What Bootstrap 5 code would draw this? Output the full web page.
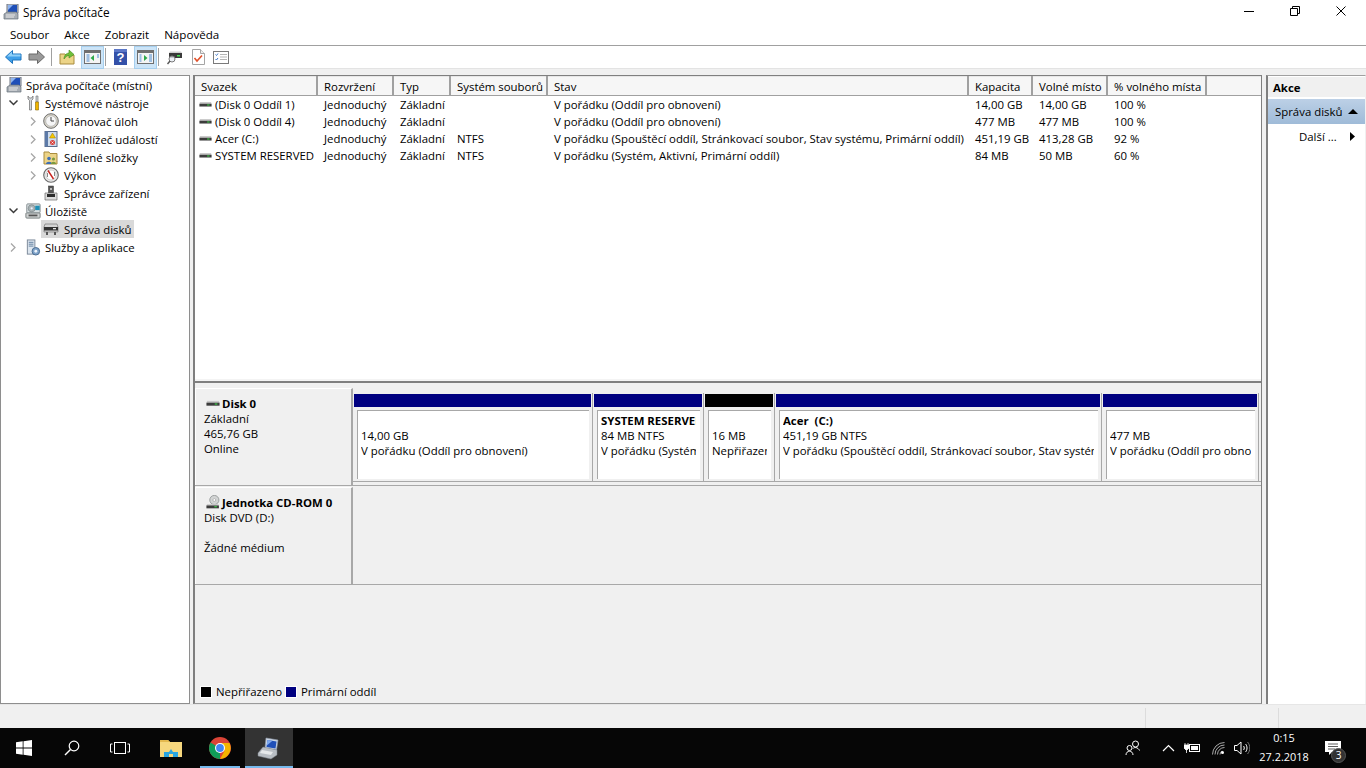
<!DOCTYPE html>
<html lang="cs">
<head>
<meta charset="utf-8">
<title>Správa počítače</title>
<link href="https://cdn.jsdelivr.net/npm/bootstrap@5.3.0/dist/css/bootstrap.min.css" rel="stylesheet">
<style>
html,body{margin:0;height:768px;overflow:hidden}
body{font-family:"Open Sans","Noto Sans",sans-serif;font-size:11.4px;line-height:15px;color:#000;background:#f0f0f0;width:1366px}
svg{display:block;flex:none}
.wnd{height:728px}
.titlerow{height:24px;background:#fff;padding-left:3px}
.titlerow .ttl{margin-left:4px;font-size:11.8px}
.ctlset{margin-right:2px;margin-top:-3px}
.ctl{width:46px;height:20px}
.menurow{height:22px;background:#fff;border-bottom:1px solid #a0a0a0;padding-left:10px;gap:15px}
.menurow span{font-size:11.6px}
.toolrow{height:23px;background:#fff;padding-left:1.5px;border-bottom:1px solid #e3e3e3}
.tb{width:23px;height:23px}
.tb-on{background:#cce4f7;border:1px solid #a6cfee;margin-left:2px}
.tsep{width:1px;height:18px;background:#a0a0a0}
.ts1{margin:0 4px 0 3px}.ts2{margin:0 3px 0 1px}.ts3{margin:0 5px 0 1px}
.mainrow{height:635px;padding-top:6px}
.treepane{width:190px;flex:none;border:1px solid #8e8e8e;background:#fff}
.trow{height:18px;padding-left:7px}
.trow.root{padding-left:5px}
.trow.l2{padding-left:27px}
.chev{width:11px;height:18px;margin-right:6px}
.l2 .chev{margin-right:4px}
.trow .ico{margin-right:4px}
.l2 .ico{margin-right:5px}
.selwrap{background:#d9d9d9;height:18px;padding:0 3px 0 2px;margin-left:-2px}
.midpane{width:1069px;flex:none;margin-left:3px;border-left:2px solid #7f7f7f;border-top:1px solid #7f7f7f;border-bottom:1px solid #9a9a9a;border-right:1px solid #7f7f7f}
.listpart{height:303px;flex:none;background:#fff;overflow:hidden}
.vols{table-layout:fixed;width:1066px;border-collapse:collapse;margin:0}
.vols th,.vols td{font-weight:400;padding:0 0 0 7px;white-space:nowrap;overflow:hidden;background:transparent;border:0;box-shadow:none;color:#000;font-size:11.4px}
.vols th{height:19px;line-height:16px;padding:1px 0 0 6px;background:#f6f6f6;border-right:2px solid #a0a0a0;border-bottom:1px solid #a0a0a0;border-top:1px solid #e6e6e6;vertical-align:middle}
.vols td{height:17px;line-height:17px}
.vols th:last-child{border-right:0}
.c1{width:122px}.c2{width:76px}.c3{width:57px}.c4{width:97px}.c5{width:421px}.c6{width:64px}.c7{width:75px}.c8{width:99px}
.vols td.volname{padding-left:4px}
.volname .inner{gap:3px}
.splitter{height:4px;flex:none;background:#f4f4f4;border-bottom:2px solid #7f7f7f}
.graph{background:#f0f0f0;padding-top:5px}
.diskrow{height:98px;flex:none;border-bottom:1px solid #a8a8a8;margin-bottom:1px}
.disklabel{width:158px;flex:none;padding:7px 0 0 8px;background:#f0f0f0;border-top:1px solid #fff;border-left:1px solid #fff;border-right:2px solid #a8a8a8}
.disklabel .nm{font-weight:700;height:15px;margin-left:2px}
.nm-d{gap:2px}.nm-c{gap:1px}
.parts{padding-top:5px;padding-left:1px;height:94px;border-bottom:1px solid #a8a8a8}
.prt{height:88px;flex:none;padding-right:3px;position:relative}
.prt::after{content:"";position:absolute;right:1px;top:0;bottom:0;width:1px;background:#a8a8a8}
.bar-p{height:13px;background:#000080;margin-top:1px}
.bar-n{height:13px;background:#000;margin-top:1px}
.pbox{height:69px;margin:3px 2px 0 3px;background:#fff;border-top:1px solid #a8a8a8;border-left:1px solid #a8a8a8;padding:2px 0 0 3px;white-space:nowrap}
.pclip{overflow:hidden;height:60px;margin-right:4px}
.w1{width:240px}.w2{width:111px}.w3{width:71px}.w4{width:327px}.w5{width:157px}
.b{font-weight:700}
.legend{height:21px;margin-top:auto;margin-bottom:1px;padding-left:5px;gap:4px}
.sw{width:12px;height:12px;flex:none;border:1px solid #fff}
.sw-n{background:#000}.sw-p{background:#000080}
.leg-t{width:65px;flex:none;white-space:nowrap}
.actpane{flex:1;margin-left:4px;border-left:2px solid #7f7f7f;border-top:1px solid #a0a0a0;background:#fff;border-right:1px solid #f0f0f0}
.acthd{height:21px;background:#f0f0f0;padding-left:5px;font-weight:700;border-bottom:1px solid #fff;margin-top:1px}
.actsel{height:25px;margin-top:1px;background:linear-gradient(#bcd0e6,#9fbbd8);padding:0 7px 0 7px}
.actitem{height:24px;padding:0 10px 0 31px}
.statusrow{height:24px;background:#f0f0f0;border-top:1px solid #e6e6e6;padding-top:3px}
.stc{height:20px;border-left:1px solid #dcdcdc}
.st1{width:1145px;border-left:0}.st2{width:133px}
.taskbar{height:40px;background:#060606;color:#fff}
.tk{height:40px;width:48px;position:relative}
.tk-m3{margin-left:3px}.tk-m1{margin-left:1px}
.tk-run::after{content:"";position:absolute;left:4px;right:4px;bottom:0;height:2px;background:#76b9ed}
.tk-act{background:#333}
.tk-act::after{left:0;right:0}
.tkspace{flex:1}
.clock{width:62px;font-size:10.9px;line-height:19px;text-align:center;color:#fff;margin-top:-2px}
.tray{width:24px}
.tr-p{margin-right:11px}.tr-w{margin-left:2px}.tr-s{width:23px}
.noti{position:absolute;left:16px;top:20px;width:15px;height:15px;border-radius:50%;background:#333;border:1px solid #555;font-size:10px;line-height:13px;text-align:center;color:#fff}
.tk-n{width:36px}
.tk-end{width:15px}
</style>
</head>
<body>
<svg width="0" height="0" class="position-absolute">
<defs>
<symbol id="comp" viewBox="0 0 16 16"><rect x="4" y="0" width="11" height="9" fill="#c8ccd4" stroke="#6a7280"/><rect x="5" y="1" width="9" height="7" fill="#1f4fb8"/><path d="M5 1h5l-5 5z" fill="#8fb4ee"/><path d="M1 10l3-2h9l2 2v5H1z" fill="#a7adb4" stroke="#66707a" stroke-width=".7"/><path d="M3 11h9M3 13h8" stroke="#e8e8e8"/></symbol>
<symbol id="tools" viewBox="0 0 16 16"><path d="M3 1v3l1.500 1.500V15h2V5.500L8 4V1L6.500 3h-2z" fill="#d4d8dc" stroke="#6c6c6c" stroke-width=".7"/><path d="M11 1h2v6h-2z" fill="#cfd3d8" stroke="#6c6c6c" stroke-width=".6"/><path d="M10.500 7h3v8h-3z" fill="#f0b400" stroke="#8a6a00" stroke-width=".6"/></symbol>
<symbol id="clk" viewBox="0 0 16 16"><circle cx="8" cy="8" r="7.300" fill="#d8d4c8" stroke="#6f6f6f"/><circle cx="8" cy="8" r="5.300" fill="#f6f6f6" stroke="#a5a5a5" stroke-width=".6"/><path d="M8 4v4h3" fill="none" stroke="#444" stroke-width="1"/></symbol>
<symbol id="log" viewBox="0 0 16 16"><rect x="2" y="0.500" width="12" height="15" fill="#cfdcec" stroke="#5a6d8c"/><rect x="2" y="0.500" width="3" height="15" fill="#5c7aa8"/><path d="M9.500 2l3 5h-6z" fill="#f7c600" stroke="#9a7d00" stroke-width=".5"/><circle cx="9.500" cy="11.500" r="2.500" fill="#d8403a"/><path d="M8.500 10.500l2 2m0-2l-2 2" stroke="#fff" stroke-width=".7"/></symbol>
<symbol id="share" viewBox="0 0 16 16"><path d="M1 3h5l1 1.500h7V15H1z" fill="#ecd488" stroke="#a98c3e"/><circle cx="6" cy="9.500" r="1.800" fill="#3f6fb5"/><path d="M3 15c0-3 6-3 6 0z" fill="#3f6fb5"/><circle cx="10.500" cy="10" r="1.600" fill="#7c9a3e"/><path d="M8 15c0-3 5-3 5 0z" fill="#7c9a3e"/></symbol>
<symbol id="perf" viewBox="0 0 16 16"><circle cx="8" cy="8" r="7.300" fill="#e9e9e9" stroke="#6a6a6a" stroke-width="1.100"/><circle cx="8" cy="8" r="5" fill="#fff" stroke="#b5b5b5" stroke-width=".6"/><path d="M5 3.500L10.500 12" stroke="#c8201c" stroke-width="1.400"/><path d="M4.500 6v4M11.500 5v4" stroke="#555" stroke-width=".7"/></symbol>
<symbol id="devm" viewBox="0 0 16 16"><rect x="5.500" y="1" width="5" height="7" fill="#555" stroke="#333" stroke-width=".5"/><path d="M2 8h12v7H2z" fill="#dcdcdc" stroke="#6a6a6a" stroke-width=".7"/><rect x="4" y="9" width="8" height="3" fill="#2c2c2c"/><circle cx="8" cy="4" r="1" fill="#ddd"/></symbol>
<symbol id="stor" viewBox="0 0 18 18"><rect x="1" y="11" width="16" height="6" rx="1" fill="#cfd2d2" stroke="#6f7676"/><rect x="4" y="13" width="10" height="2" fill="#555"/><rect x="2" y="1" width="15" height="10" rx="1" fill="#d9e0e2" stroke="#7c8588"/><circle cx="7.500" cy="6" r="4" fill="#a8b2b4" stroke="#6c7678" stroke-width=".6"/><circle cx="7.500" cy="6" r="1.300" fill="#eef"/><rect x="11.500" y="3" width="5" height="5" fill="#1f8fb5"/></symbol>
<symbol id="disk" viewBox="0 0 16 8"><path d="M1 1h14v2H1z" fill="#c9c9c9"/><path d="M0.500 3h15v3.500H.5z" fill="#3c3c3c"/><rect x="10" y="4" width="3" height="1.200" fill="#3ee04a"/></symbol>
<symbol id="bigdisk" viewBox="0 0 16 16"><path d="M2 3h12l1 3v5H1V6z" fill="#d5d5d5" stroke="#777" stroke-width=".7"/><rect x="1" y="6" width="14" height="3.500" fill="#333"/><rect x="3" y="11" width="2" height="3" fill="#555"/><rect x="11" y="11" width="2" height="3" fill="#555"/><rect x="10" y="7" width="3" height="1.300" fill="#e8e8e8"/></symbol>
<symbol id="svc" viewBox="0 0 16 18"><rect x="2" y="1" width="8" height="15" fill="#dde6ef" stroke="#7a8898"/><path d="M3.500 3.500h5M3.500 5.500h5M3.500 7.500h5" stroke="#5f7d9e"/><circle cx="11" cy="13" r="4" fill="#7fa3c9" stroke="#486a8f"/><circle cx="11" cy="13" r="1.500" fill="#eef4fb"/></symbol>
<symbol id="cd" viewBox="0 0 18 18"><circle cx="10" cy="6" r="5.500" fill="#d2d4d4" stroke="#8f9494"/><circle cx="10" cy="6" r="1.700" fill="#fff" stroke="#888" stroke-width=".6"/><path d="M1 11h14v1.500H1z" fill="#c9c9c9"/><path d="M0.500 12.500h15V16H.5z" fill="#3c3c3c"/><rect x="10" y="13.500" width="3" height="1.200" fill="#3ee04a"/></symbol>
<symbol id="chd" viewBox="0 0 11 8"><path d="M1.500 1.500L5.500 5.500L9.500 1.500" fill="none" stroke="#3a3a3a" stroke-width="1.500"/></symbol>
<symbol id="chr" viewBox="0 0 11 11"><path d="M3 1.500L7 5.500L3 9.500" fill="none" stroke="#a6a6a6" stroke-width="1.300"/></symbol>
</defs>
</svg>

<div class="wnd d-flex flex-column">
  <div class="titlerow d-flex align-items-center">
    <svg width="16" height="16"><use href="#comp"/></svg>
    <span class="ttl">Správa počítače</span>
    <div class="ctlset ms-auto d-flex">
      <div class="ctl d-flex align-items-center justify-content-center"><svg width="10" height="10"><path d="M0 5.500h10" stroke="#000"/></svg></div>
      <div class="ctl d-flex align-items-center justify-content-center"><svg width="10" height="10"><path d="M.5 2.500h7v7h-7zM2.500 2.500v-2h7v7h-2" fill="none" stroke="#000"/></svg></div>
      <div class="ctl d-flex align-items-center justify-content-center"><svg width="10" height="10"><path d="M.5.5l9 9m0-9l-9 9" stroke="#000"/></svg></div>
    </div>
  </div>
  <div class="menurow d-flex align-items-center">
    <span>Soubor</span><span>Akce</span><span>Zobrazit</span><span>Nápověda</span>
  </div>
  <div class="toolrow d-flex align-items-center">
    <div class="tb d-flex align-items-center justify-content-center"><svg width="17" height="14" viewBox="0 0 17 14"><path d="M0.500 7L7.500 0.500V4H16V10H7.500V13.500z" fill="#3f9fe8" stroke="#1f74bd"/><path d="M7 1.500V4.500H15.500V6.500H2z" fill="#8fd0f7"/></svg></div>
    <div class="tb d-flex align-items-center justify-content-center"><svg width="17" height="14" viewBox="0 0 17 14"><path d="M16.500 7L9.500 0.500V4H1V10H9.500V13.500z" fill="#9a9a9a" stroke="#6a6a6a"/></svg></div>
    <div class="tsep ts1"></div>
    <div class="tb d-flex align-items-center justify-content-center"><svg width="16" height="16" viewBox="0 0 16 16"><path d="M1 5h5l1 1h8v9H1z" fill="#ecd488" stroke="#a98c3e"/><path d="M5 10c0-4 3-6 5-6V1l5 4.500L10 9V6.500C8 6.500 6.500 8 5 10z" fill="#6fbf3a" stroke="#418a1e" stroke-width=".6"/></svg></div>
    <div class="tb tb-on d-flex align-items-center justify-content-center"><svg width="17" height="14" viewBox="0 0 17 14"><rect x=".5" y=".5" width="16" height="13" fill="#f4f4f4" stroke="#6f6f6f"/><rect x="1" y="1" width="15" height="2" fill="#6f6f6f"/><path d="M2.500 5h3M2.500 7h3M2.500 9h3M2.500 11h3M13 5h2M13 7h2" stroke="#4a8bd0"/><path d="M10 5v6L6.500 8z" fill="#2fa84a"/></svg></div>
    <div class="tsep ts2"></div>
    <div class="tb d-flex align-items-center justify-content-center"><svg width="13" height="16" viewBox="0 0 13 16"><rect width="13" height="16" fill="#3350a8"/><path d="M0 0h13v3H0z" fill="#5b77c8"/><text x="6.500" y="13" text-anchor="middle" font-family="Liberation Sans" font-weight="700" font-size="13" fill="#fff">?</text></svg></div>
    <div class="tb tb-on d-flex align-items-center justify-content-center"><svg width="17" height="14" viewBox="0 0 17 14"><rect x=".5" y=".5" width="16" height="13" fill="#f4f4f4" stroke="#6f6f6f"/><rect x="1" y="1" width="15" height="2" fill="#6f6f6f"/><path d="M2.500 5h2M2.500 7h2M2.500 9h2M2.500 11h2M12 5h3M12 7h3M12 9h3M12 11h3" stroke="#4a8bd0"/><path d="M7 5v6l3.500-3z" fill="#2fa84a"/></svg></div>
    <div class="tsep ts3"></div>
    <div class="tb d-flex align-items-center justify-content-center"><svg width="16" height="15" viewBox="0 0 16 15"><rect x="2" y="3" width="13" height="5" fill="#3a3a3a"/><path d="M3 1.500h11L15 3H2z" fill="#cfcfcf"/><rect x="10" y="5" width="3" height="1.500" fill="#44e04e"/><circle cx="5" cy="9" r="3" fill="#e8eef4" fill-opacity=".8" stroke="#7a7a7a"/><path d="M3 11l-2.500 3" stroke="#555" stroke-width="1.400"/></svg></div>
    <div class="tb d-flex align-items-center justify-content-center"><svg width="13" height="16" viewBox="0 0 13 16"><path d="M.5.5h8l4 4v11H.5z" fill="#fff" stroke="#a5a5a5"/><path d="M8.500.5v4h4" fill="#eee" stroke="#a5a5a5"/><path d="M2.500 9l2.500 3L10 6.500" fill="none" stroke="#e0502a" stroke-width="1.600"/></svg></div>
    <div class="tb d-flex align-items-center justify-content-center"><svg width="16" height="13" viewBox="0 0 16 13"><rect x=".5" y=".5" width="15" height="12" fill="#fff" stroke="#7a7a7a"/><path d="M2.500 3.500l1 1 1.500-2M2.500 8l1 1 1.500-2" fill="none" stroke="#3f78c8"/><path d="M7 3.500h7M7 6h7M7 8.500h7" stroke="#b5b5b5"/></svg></div>
  </div>

  <div class="mainrow d-flex">
    <div class="treepane">
      <div class="trow root d-flex align-items-center"><svg class="ico" width="16" height="16"><use href="#comp"/></svg>Správa počítače (místní)</div>
      <div class="trow d-flex align-items-center"><div class="chev d-flex align-items-center"><svg width="11" height="8"><use href="#chd"/></svg></div><svg class="ico" width="16" height="16"><use href="#tools"/></svg>Systémové nástroje</div>
      <div class="trow l2 d-flex align-items-center"><div class="chev d-flex align-items-center"><svg width="11" height="11"><use href="#chr"/></svg></div><svg class="ico" width="16" height="16"><use href="#clk"/></svg>Plánovač úloh</div>
      <div class="trow l2 d-flex align-items-center"><div class="chev d-flex align-items-center"><svg width="11" height="11"><use href="#chr"/></svg></div><svg class="ico" width="16" height="16"><use href="#log"/></svg>Prohlížeč událostí</div>
      <div class="trow l2 d-flex align-items-center"><div class="chev d-flex align-items-center"><svg width="11" height="11"><use href="#chr"/></svg></div><svg class="ico" width="16" height="16"><use href="#share"/></svg>Sdílené složky</div>
      <div class="trow l2 d-flex align-items-center"><div class="chev d-flex align-items-center"><svg width="11" height="11"><use href="#chr"/></svg></div><svg class="ico" width="16" height="16"><use href="#perf"/></svg>Výkon</div>
      <div class="trow l2 d-flex align-items-center"><div class="chev"></div><svg class="ico" width="16" height="16"><use href="#devm"/></svg>Správce zařízení</div>
      <div class="trow d-flex align-items-center"><div class="chev d-flex align-items-center"><svg width="11" height="8"><use href="#chd"/></svg></div><svg class="ico" width="16" height="16"><use href="#stor"/></svg>Úložiště</div>
      <div class="trow l2 d-flex align-items-center"><div class="chev"></div><div class="selwrap d-flex align-items-center"><svg class="ico" width="16" height="16"><use href="#bigdisk"/></svg>Správa disků</div></div>
      <div class="trow d-flex align-items-center"><div class="chev d-flex align-items-center"><svg width="11" height="11"><use href="#chr"/></svg></div><svg class="ico" width="16" height="17"><use href="#svc"/></svg>Služby a aplikace</div>
    </div>

    <div class="midpane d-flex flex-column">
      <div class="listpart">
        <table class="table vols">
          <thead><tr><th class="c1">Svazek</th><th class="c2">Rozvržení</th><th class="c3">Typ</th><th class="c4">Systém souborů</th><th class="c5">Stav</th><th class="c6">Kapacita</th><th class="c7">Volné místo</th><th class="c8">% volného místa</th><th></th></tr></thead>
          <tbody>
            <tr><td class="volname"><div class="inner d-flex align-items-center"><svg width="13" height="7"><use href="#disk"/></svg>(Disk 0 Oddíl 1)</div></td><td>Jednoduchý</td><td>Základní</td><td></td><td>V pořádku (Oddíl pro obnovení)</td><td>14,00 GB</td><td>14,00 GB</td><td>100 %</td><td></td></tr>
            <tr><td class="volname"><div class="inner d-flex align-items-center"><svg width="13" height="7"><use href="#disk"/></svg>(Disk 0 Oddíl 4)</div></td><td>Jednoduchý</td><td>Základní</td><td></td><td>V pořádku (Oddíl pro obnovení)</td><td>477 MB</td><td>477 MB</td><td>100 %</td><td></td></tr>
            <tr><td class="volname"><div class="inner d-flex align-items-center"><svg width="13" height="7"><use href="#disk"/></svg>Acer (C:)</div></td><td>Jednoduchý</td><td>Základní</td><td>NTFS</td><td>V pořádku (Spouštěcí oddíl, Stránkovací soubor, Stav systému, Primární oddíl)</td><td>451,19 GB</td><td>413,28 GB</td><td>92 %</td><td></td></tr>
            <tr><td class="volname"><div class="inner d-flex align-items-center"><svg width="13" height="7"><use href="#disk"/></svg>SYSTEM RESERVED</div></td><td>Jednoduchý</td><td>Základní</td><td>NTFS</td><td>V pořádku (Systém, Aktivní, Primární oddíl)</td><td>84 MB</td><td>50 MB</td><td>60 %</td><td></td></tr>
          </tbody>
        </table>
      </div>
      <div class="splitter"></div>
      <div class="graph d-flex flex-column flex-grow-1">
        <div class="diskrow d-flex">
          <div class="disklabel">
            <div class="nm nm-d d-flex align-items-center"><svg width="14" height="7"><use href="#disk"/></svg>Disk 0</div>
            <div>Základní</div><div>465,76 GB</div><div>Online</div>
          </div>
          <div class="parts d-flex flex-grow-1">
            <div class="prt w1"><div class="bar-p"></div><div class="pbox"><div class="pclip"><div>&nbsp;</div><div>14,00 GB</div><div>V pořádku (Oddíl pro obnovení)</div></div></div></div>
            <div class="prt w2"><div class="bar-p"></div><div class="pbox"><div class="pclip"><div class="b">SYSTEM RESERVED</div><div>84 MB NTFS</div><div>V pořádku (Systém</div></div></div></div>
            <div class="prt w3"><div class="bar-n"></div><div class="pbox"><div class="pclip"><div>&nbsp;</div><div>16 MB</div><div>Nepřiřazeno</div></div></div></div>
            <div class="prt w4"><div class="bar-p"></div><div class="pbox"><div class="pclip"><div class="b">Acer &nbsp;(C:)</div><div>451,19 GB NTFS</div><div>V pořádku (Spouštěcí oddíl, Stránkovací soubor, Stav systému</div></div></div></div>
            <div class="prt w5"><div class="bar-p"></div><div class="pbox"><div class="pclip"><div>&nbsp;</div><div>477 MB</div><div>V pořádku (Oddíl pro obnovení)</div></div></div></div>
          </div>
        </div>
        <div class="diskrow d-flex">
          <div class="disklabel">
            <div class="nm nm-c d-flex align-items-center"><svg width="15" height="15"><use href="#cd"/></svg>Jednotka CD-ROM 0</div>
            <div>Disk DVD (D:)</div><div>&nbsp;</div><div>Žádné médium</div>
          </div>
          <div class="flex-grow-1"></div>
        </div>
        <div class="legend d-flex align-items-center">
          <div class="sw sw-n"></div><span class="leg-t">Nepřiřazeno</span>
          <div class="sw sw-p"></div><span>Primární oddíl</span>
        </div>
      </div>
    </div>

    <div class="actpane">
      <div class="acthd d-flex align-items-center">Akce</div>
      <div class="actsel d-flex align-items-center justify-content-between">Správa disků<svg width="10" height="5" viewBox="0 0 10 5"><path d="M0 5L5 0L10 5z" fill="#000"/></svg></div>
      <div class="actitem d-flex align-items-center justify-content-between">Další ...<svg width="5" height="9" viewBox="0 0 5 9"><path d="M0 0L5 4.500L0 9z" fill="#000"/></svg></div>
    </div>
  </div>

  <div class="statusrow d-flex flex-grow-1">
    <div class="stc st1"></div><div class="stc st2"></div><div class="stc flex-grow-1"></div>
  </div>
</div>

<div class="taskbar d-flex">
  <div class="tk d-flex align-items-center justify-content-center"><svg width="16" height="16" viewBox="0 0 16 16"><path d="M0 2.300L6.700 1.300V7.600H0zM7.500 1.200L16 0V7.600H7.500zM0 8.400H6.700V14.700L0 13.700zM7.500 8.400H16V16L7.500 14.800z" fill="#fff"/></svg></div>
  <div class="tk d-flex align-items-center justify-content-center"><svg width="16" height="16" viewBox="0 0 16 16"><circle cx="10" cy="6" r="4.800" fill="none" stroke="#fff" stroke-width="1.200"/><path d="M6.500 9.500L1 15" stroke="#fff" stroke-width="1.400"/></svg></div>
  <div class="tk d-flex align-items-center justify-content-center"><svg width="20" height="14" viewBox="0 0 20 14"><rect x="4.500" y="1.500" width="11" height="11" fill="none" stroke="#fff"/><path d="M2.500 3H.5v8h2M17.500 3h2v8h-2" fill="none" stroke="#fff"/></svg></div>
  <div class="tk tk-m3 d-flex align-items-center justify-content-center"><svg width="22" height="18" viewBox="0 0 22 18"><path d="M0 1h8l2 2h12v15H0z" fill="#f6d77e"/><path d="M0 1h8l2 2H0z" fill="#e4b94f"/><path d="M4 18v-5h5l2-3 2 3h5v5z" fill="#2aa5e0"/><path d="M9 18v-3h4v3z" fill="#f6d77e"/></svg></div>
  <div class="tk tk-m1 tk-run d-flex align-items-center justify-content-center"><svg width="22" height="22" viewBox="0 0 22 22"><circle cx="11" cy="11" r="11" fill="#db4437"/><path d="M11 11L1.500 5.500A11 11 0 0 0 11 22z" fill="#0f9d58"/><path d="M11 6h9.500A11 11 0 0 1 11 22l4.500-8z" fill="#f4b400"/><circle cx="11" cy="11" r="5" fill="#fff"/><circle cx="11" cy="11" r="3.900" fill="#4285f4"/></svg></div>
  <div class="tk tk-m1 tk-run tk-act d-flex align-items-center justify-content-center"><svg width="24" height="24" viewBox="0 0 24 24"><path d="M9 2l12 2-1.500 10L8 12z" fill="#c9d4e4" stroke="#8e98a8" stroke-width=".6"/><path d="M10.500 4l9 1.500-1 7-9-1.500z" fill="#1f4fb8"/><path d="M10.500 4l5 .8-6 5z" fill="#7ea8ec"/><path d="M1 17l5-6 14 3v5l-6 4-13-3z" fill="#b9bec4" stroke="#7b8188" stroke-width=".5"/><path d="M5 14l11 2-2 3-11-2z" fill="#e6e8ea"/></svg></div>
  <div class="tkspace"></div>
  <div class="tray tr-p d-flex align-items-center justify-content-center"><svg width="16" height="16" viewBox="0 0 16 16"><circle cx="10.500" cy="4" r="3" fill="none" stroke="#fff"/><circle cx="4.500" cy="8" r="2.500" fill="none" stroke="#fff"/><path d="M1 15c0-5 7-5 7 0M8 8.500c1-1.500 5-1.500 6.500 2" fill="none" stroke="#fff"/></svg></div>
  <div class="tray d-flex align-items-center justify-content-center"><svg width="13" height="8" viewBox="0 0 13 8"><path d="M1 7L6.500 1.500L12 7" fill="none" stroke="#fff" stroke-width="1.200"/></svg></div>
  <div class="tray d-flex align-items-center justify-content-center"><svg width="16" height="12" viewBox="0 0 16 12"><path d="M0 3h5v3l-2 2-1-0-2-2zM1 1v2M4 1v2M2.500 8v3" fill="#fff" stroke="#fff" stroke-width=".8"/><rect x="5.500" y="2.500" width="10" height="7" fill="none" stroke="#fff"/><rect x="7" y="4" width="7" height="4" fill="#fff"/></svg></div>
  <div class="tray tr-w d-flex align-items-center justify-content-center"><svg width="13" height="13" viewBox="0 0 13 13"><path d="M.5 12.500A12 12 0 0 1 12.500.5M3 12.500A9.500 9.500 0 0 1 12.500 3M5.500 12.500a7 7 0 0 1 7-7M8 12.500a4.500 4.500 0 0 1 2-3.600" fill="none" stroke="#bbb" stroke-width=".9"/><circle cx="10.500" cy="10.500" r="1.500" fill="#fff"/></svg></div>
  <div class="tray tr-s d-flex align-items-center justify-content-center"><svg width="16" height="14" viewBox="0 0 16 14"><path d="M.5 4.500h2.500L7 1v12L3 9.500H.5z" fill="none" stroke="#fff"/><path d="M9.500 5c1 1 1 3 0 4M11.500 3c2 2 2 6 0 8" fill="none" stroke="#fff"/><path d="M13.500 1c3 3 3 9 0 12" fill="none" stroke="#777"/></svg></div>
  <div class="clock align-self-center"><div>0:15</div><div>27.2.2018</div></div>
  <div class="tk tk-n d-flex align-items-center justify-content-center"><svg width="16" height="15" viewBox="0 0 16 15"><path d="M0 0h16v11H7l-3 3v-3H0z" fill="#fff"/><path d="M3 3h10M3 5.500h10M3 8h7" stroke="#333" stroke-width=".8"/></svg><div class="noti">3</div></div>
  <div class="tk-end"></div>
</div>
</body>
</html>
